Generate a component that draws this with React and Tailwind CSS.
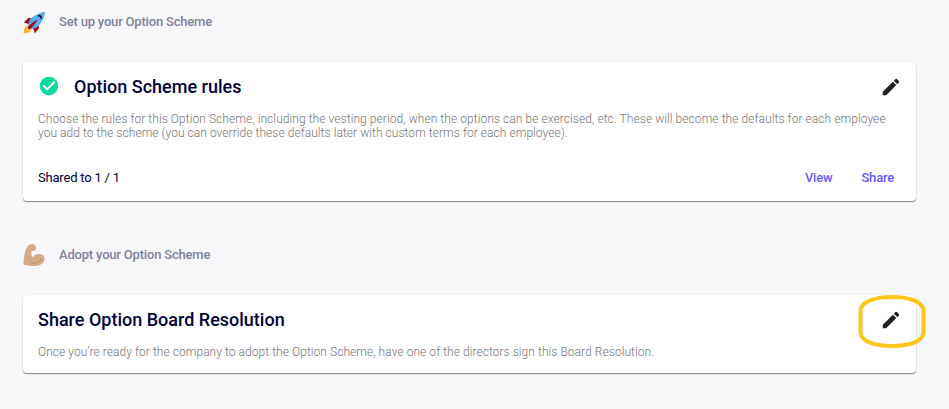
import { MdCheckCircle, MdEdit } from "react-icons/md";

function RocketIcon() {
  return (
    <svg viewBox="0 0 36 36" className="w-[22px] h-[22px] mt-px shrink-0">
      <path fill="#A0041E" d="M1 17l8-7 16 1 1 16-7 8s.001-5.999-6-12-12-6-12-6z" />
      <path fill="#FFAC33" d="M.973 35s-.036-7.979 2.985-11S15 21.187 15 21.187 14.999 29 11.999 32c-3 3-11.026 3-11.026 3z" />
      <circle fill="#FFCC4D" cx="8.999" cy="27" r="4" />
      <path fill="#55ACEE" d="M35.999 0s-10 0-22 10c-6 5-6 14-4 16s11 2 16-4c10-12 10-22 10-22z" />
      <path d="M26.999 5c-1.623 0-3.013.971-3.641 2.36.502-.227 1.055-.36 1.641-.36 2.209 0 4 1.791 4 4 0 .586-.133 1.139-.359 1.64 1.389-.627 2.359-2.017 2.359-3.64 0-2.209-1.791-4-4-4z" />
      <path fill="#A0041E" d="M8 28s0-4 1-5 13.001-10.999 14-10-9.001 13-10.001 14S8 28 8 28z" />
    </svg>
  );
}

function ArmIcon() {
  return (
    <svg viewBox="0 0 36 36" className="w-[22px] h-[22px] shrink-0">
      <path
        fill="#D4AB88"
        d="M15.5 0C11 0 7.5 2 5.500 7C2.500 14 1 23 .7 31.500C.7 33.500 1.500 34 3 34.300C8 35.500 13 36 18 36C28 36 35.300 31.500 35.300 24.500C35.300 19.500 31.500 16.500 26.500 16.500C22 16.500 18.500 18 16.500 21.500C14.500 20 13.500 17.500 13.800 14.500C14 12.800 14.500 11.500 15 11C17 12 20 11 21 8C22 4 20 0 15.500 0Z"
      />
      <path fill="none" stroke="#B78B60" strokeWidth="1.6" strokeLinecap="round" d="M13.500 30.500C20 33.500 28 30.500 29 25" />
    </svg>
  );
}

function SectionHeader({ icon, children }) {
  return (
    <div className="flex items-center gap-[14px] h-6">
      {icon}
      <h2 className="text-[13px] leading-5 font-medium tracking-[-0.19px] text-[#7f829b]">{children}</h2>
    </div>
  );
}

function Card({ className, children }) {
  return (
    <div
      className={`bg-white rounded px-[15px] shadow-[0_1px_1px_rgba(0,0,0,0.45),0_0_2px_rgba(0,0,0,0.1)] ${className}`}
    >
      {children}
    </div>
  );
}

function EditButton() {
  return (
    <button aria-label="Edit" className="ml-auto mr-[-1px] text-[#212121]">
      <MdEdit size={22} />
    </button>
  );
}

function App() {
  return (
    <div className="w-[949px] h-[409px] overflow-hidden bg-[#f8f8fb] pl-[23px] pr-[33px] pt-[10px] font-['Roboto',sans-serif]">

      {/* SET UP */}
      <SectionHeader icon={<RocketIcon />}>Set up your Option Scheme</SectionHeader>

      <Card className="mt-7 h-[139px] pt-[13px]">
        <div className="flex items-center h-6">
          <MdCheckCircle size={22} className="mb-[2px] text-[#0cdba0]" />
          <h3 className="ml-[14px] text-lg font-medium text-[#00003c]">Option Scheme rules</h3>
          <EditButton />
        </div>

        <p className="mt-[13px] text-xs leading-[14px] font-light tracking-[0.055px] whitespace-nowrap text-[#757575]">
          <span className="tracking-[0.071px]">Choose the rules for this Option Scheme, including the vesting period, when the options can be exercised, etc. These will become the defaults for each employee</span>
          <br />
          you add to the scheme (you can override these defaults later with custom terms for each employee).
        </p>

        <div className="mt-7 flex items-center h-5 text-[13px] tracking-[-0.2px]">
          <span className="text-[#00003c]">Shared to 1 / 1</span>
          <div className="ml-auto mr-[7px] flex gap-[29px] font-medium text-[#635bff]">
            <button>View</button>
            <button>Share</button>
          </div>
        </div>
      </Card>

      {/* ADOPT */}
      <div className="mt-[42px]">
        <SectionHeader icon={<ArmIcon />}>Adopt your Option Scheme</SectionHeader>
      </div>

      <Card className="relative mt-7 h-[78px] pt-[13px]">
        <div className="flex items-center h-6">
          <h3 className="text-lg font-medium text-[#00003c]">Share Option Board Resolution</h3>
          <EditButton />
        </div>

        <p className="mt-[13px] text-xs leading-[14px] font-light tracking-[0.057px] text-[#757575]">
          Once you're ready for the company to adopt the Option Scheme, have one of the directors sign this Board Resolution.
        </p>

        {/* highlight ring around the edit button */}
        <svg viewBox="0 0 70 56" className="absolute -right-[11px] -top-[1px] w-[70px] h-[56px] pointer-events-none">
          <path
            fill="none"
            stroke="#ffc61a"
            strokeWidth="4"
            d="M3.500 17C3.500 8 17 3 35 3S66.500 8 66.500 17V38C66.500 47 53 52 35 52S3.500 47 3.500 38Z"
          />
        </svg>
      </Card>
    </div>
  );
}

export default App;
